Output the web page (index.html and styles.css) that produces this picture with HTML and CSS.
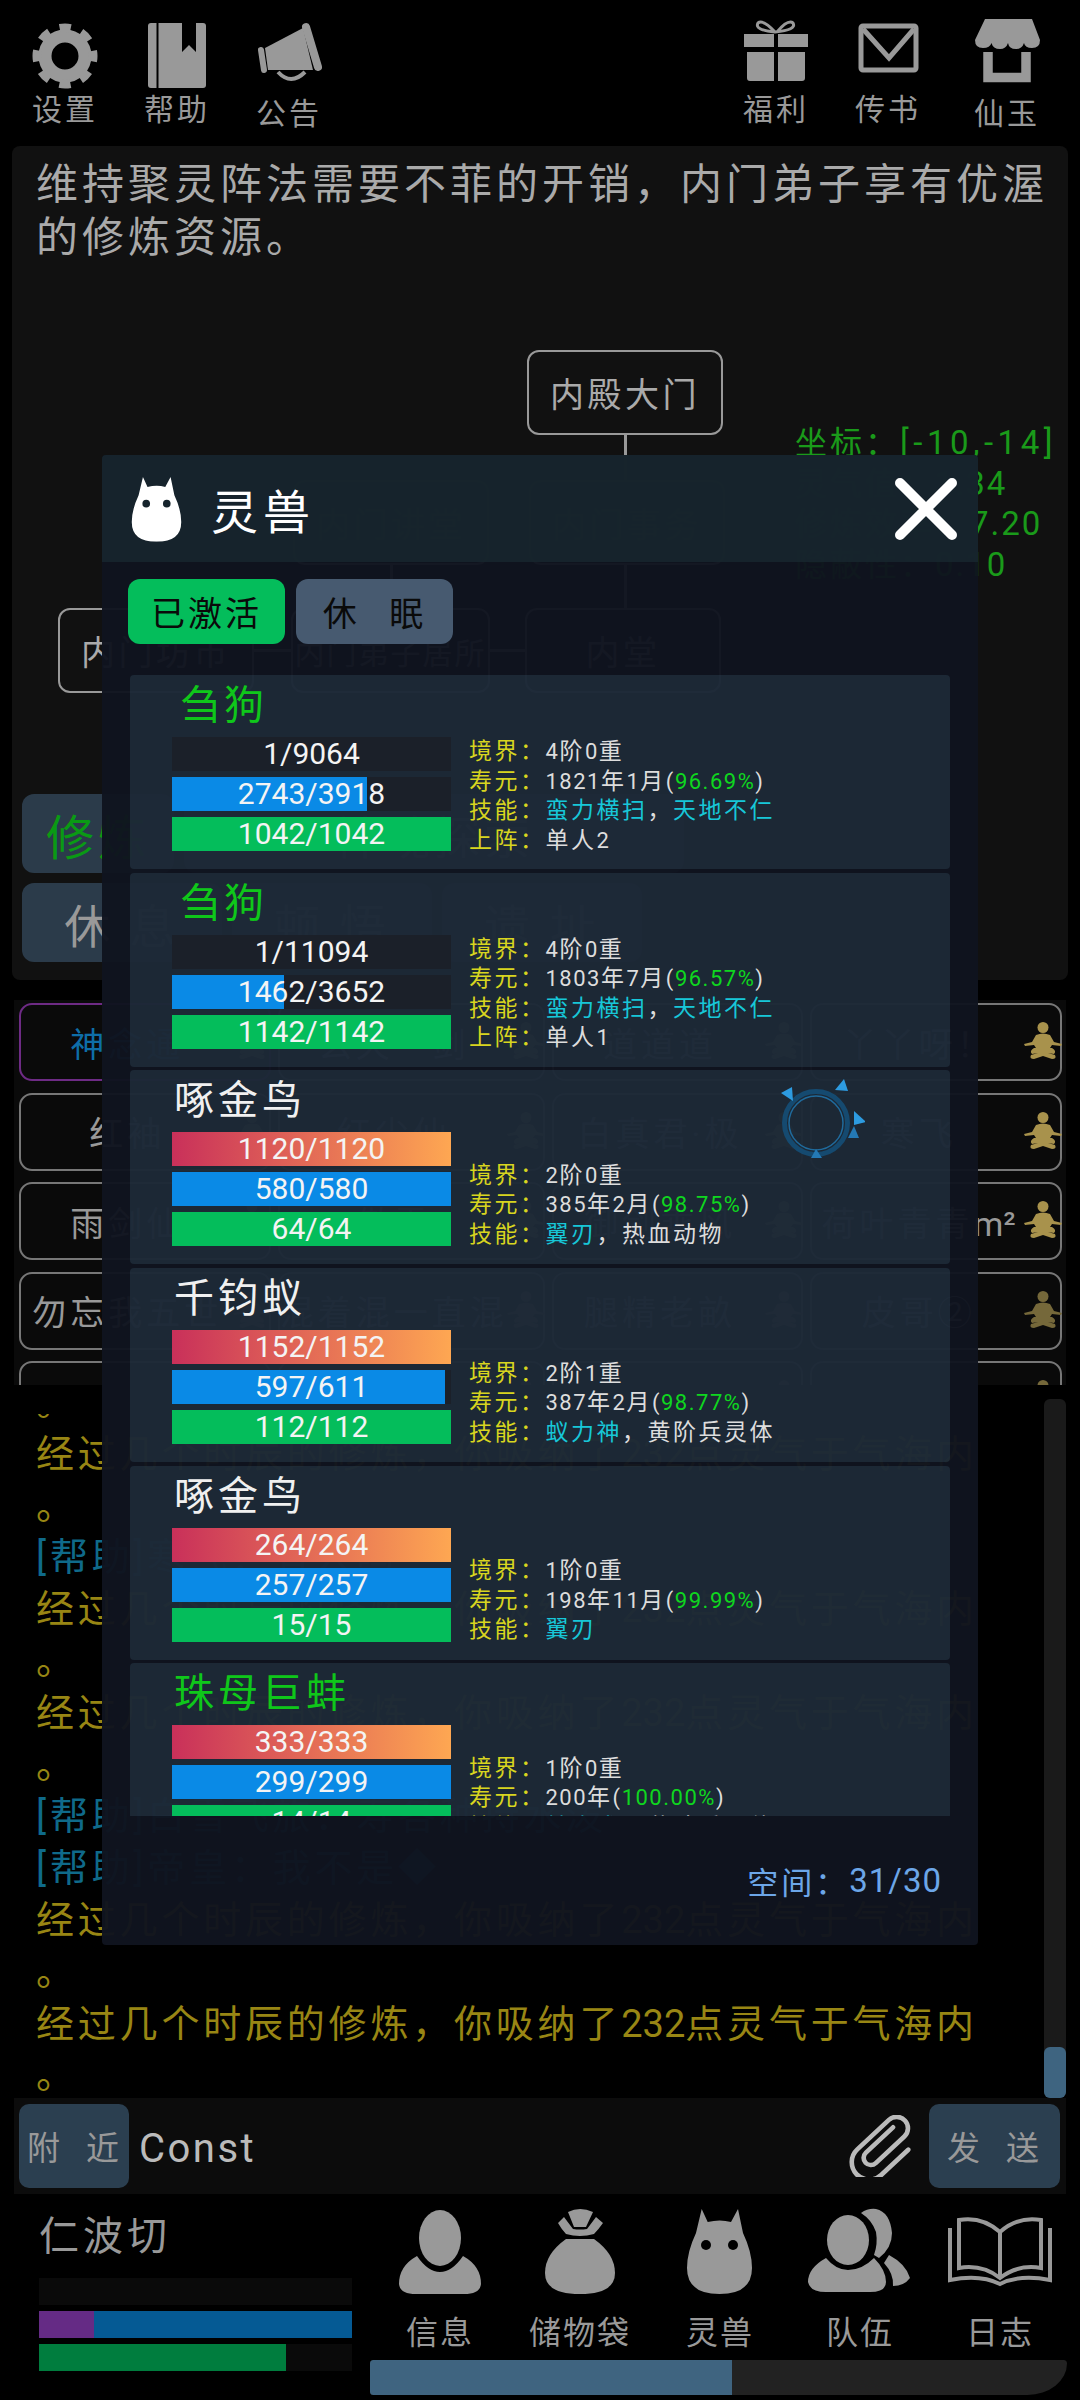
FILE: index.html
```html
<!DOCTYPE html>
<html lang="zh-CN">
<head>
<meta charset="utf-8">
<title>灵兽</title>
<link rel="stylesheet" href="styles.css">
</head>
<body>
<svg class="defs" width="0" height="0" aria-hidden="true">
  <symbol id="sit" viewBox="0 0 38 38">
    <circle cx="19" cy="5.5" r="5.5"/>
    <path d="M12 13 Q19 10 26 13 L30 20 L38 22 L37 24 L28 23 L26 26 L12 26 L10 23 L1 24 L0 22 L8 20Z"/>
    <path d="M10 26 L28 26 Q33 29 30 32 L24 31 L31 33 Q33 37 28 37 L19 34 L10 37 Q5 37 7 33 L14 31 L8 32 Q5 29 10 26Z"/>
  </symbol>
  <symbol id="cat" viewBox="0 0 67 86">
    <path d="M15.700 1 L21.700 14 Q34 11 45 14 L52 1 L57 25 Q66 44 66 60 Q66 86 33.500 86 Q1 86 1 60 Q1 44 10 25Z"/>
  </symbol>
</svg>

<div class="app">
  <header class="topbar">
    <div class="tools">
      <div class="tool">
        <svg class="tool-ico" viewBox="0 0 70 72"><circle cx="35" cy="39" r="20" fill="none" stroke="#999" stroke-width="13"/><circle cx="35" cy="39" r="28" fill="none" stroke="#999" stroke-width="9" stroke-dasharray="11 10.990" stroke-dashoffset="5.500"/></svg>
        <span class="tool-label">设置</span>
      </div>
      <div class="tool">
        <svg class="tool-ico" viewBox="0 0 70 72"><rect x="6" y="6" width="58" height="65" rx="3" fill="#999"/><path d="M15.500 6 V71" stroke="#000" stroke-width="2"/><path d="M40 6 H54 V35 L47 28 L40 35Z" fill="#000"/></svg>
        <span class="tool-label">帮助</span>
      </div>
      <div class="tool">
        <svg class="tool-ico" viewBox="0 0 70 72"><path d="M11 31 L49 11 L59 53 L14 53Z" fill="#999"/><path d="M7 33 L10 53" stroke="#999" stroke-width="6" stroke-linecap="round"/><path d="M52 10 L64 50" stroke="#999" stroke-width="8" stroke-linecap="round"/><path d="M24 55 Q37 69 51 55" fill="none" stroke="#999" stroke-width="4"/></svg>
        <span class="tool-label low">公告</span>
      </div>
    </div>
    <div class="tools tools-right">
      <div class="tool">
        <svg class="tool-ico" viewBox="0 0 70 72"><path d="M34 15 Q22 2 17 6 Q13 13 34 15 Q56 13 52 6 Q47 2 36 15" fill="none" stroke="#999" stroke-width="3"/><path d="M3 17 H33 V30 H3Z M37 17 H67 V30 H37Z" fill="#999"/><path d="M6 35 H33 V64 H9 Q6 64 6 61Z M37 35 H64 V61 Q64 64 61 64 H37Z" fill="#999"/></svg>
        <span class="tool-label">福利</span>
      </div>
      <div class="tool">
        <svg class="tool-ico" viewBox="0 0 70 72"><rect x="8" y="9" width="55" height="44" rx="2" fill="none" stroke="#999" stroke-width="5"/><path d="M10 12 L36 41 L61 12" fill="none" stroke="#999" stroke-width="5"/></svg>
        <span class="tool-label">传书</span>
      </div>
      <div class="tool tool-wide">
        <svg class="tool-ico" viewBox="0 0 70 72"><path d="M13 2 H60 L68 23 Q68 31 60 31 Q53 31 52 26 Q50 32 44 32 Q37 32 36 26 Q34 32 28 32 Q21 32 19.500 26 Q18 31 11 31 Q3 31 3 23Z" fill="#999"/><path d="M16 35 V60.500 H54 V35" fill="none" stroke="#999" stroke-width="9.500"/></svg>
        <span class="tool-label low">仙玉</span>
      </div>
    </div>
  </header>

  <section class="panel">
    <p class="panel-text">维持聚灵阵法需要不菲的开销，内门弟子享有优渥的修炼资源。</p>
    <div class="map">
      <i class="link l1"></i><i class="link l2"></i><i class="link l3"></i><i class="link l4"></i><i class="link l5"></i>
      <div class="node n1">内殿大门</div>
      <div class="node n2">内门讲堂</div>
      <div class="node n3">内门事务</div>
      <div class="node n4">内门坊市</div>
      <div class="node n5">内门弟子居所</div>
      <div class="node n6">内堂</div>
    </div>
    <div class="coords">
      <div>坐标：<span class="n wide">[-10,-14]</span></div>
      <div>灵气值：<span class="n">1.34</span></div>
      <div>修炼效率：<span class="n">7.20</span></div>
      <div>隐蔽性：<span class="n">0.10</span></div>
    </div>
    <div class="actions">
      <div class="action-row">
        <div class="action a-short on">修炼</div>
        <div class="action a-long">神魂探索</div>
      </div>
      <div class="action-row">
        <div class="action">休 息</div>
        <div class="action">顿 悟</div>
        <div class="action">遗 址</div>
      </div>
    </div>
  </section>

  <section class="players">
    <div class="player hot"><span class="pname blue">神念通</span><svg class="sit"><use href="#sit"/></svg></div>
    <div class="player"><span class="pname">玄天一剑</span><svg class="sit"><use href="#sit"/></svg></div>
    <div class="player"><span class="pname">道道道</span><svg class="sit"><use href="#sit"/></svg></div>
    <div class="player"><span class="pname">丫丫呀！</span><svg class="sit"><use href="#sit"/></svg></div>
    <div class="player"><span class="pname">红袖</span><svg class="sit"><use href="#sit"/></svg></div>
    <div class="player"><span class="pname">红尘仙</span><svg class="sit"><use href="#sit"/></svg></div>
    <div class="player"><span class="pname">白真君·极</span><svg class="sit"><use href="#sit"/></svg></div>
    <div class="player"><span class="pname">寒飞</span><svg class="sit"><use href="#sit"/></svg></div>
    <div class="player"><span class="pname">雨剑仙</span><svg class="sit"><use href="#sit"/></svg></div>
    <div class="player"><span class="pname">傲雪</span><svg class="sit"><use href="#sit"/></svg></div>
    <div class="player"><span class="pname">御剑乘风</span><svg class="sit"><use href="#sit"/></svg></div>
    <div class="player"><span class="pname">荷叶青青<span class="n">m²</span></span><svg class="sit"><use href="#sit"/></svg></div>
    <div class="player dim"><span class="pname">勿忘我五世</span><svg class="sit"><use href="#sit"/></svg></div>
    <div class="player dim"><span class="pname">混着混一直混</span><svg class="sit"><use href="#sit"/></svg></div>
    <div class="player dim"><span class="pname">腿精老畝</span><svg class="sit"><use href="#sit"/></svg></div>
    <div class="player dim"><span class="pname">皮哥②</span><svg class="sit"><use href="#sit"/></svg></div>
    <div class="player dim"><span class="pname">云中鹤</span><svg class="sit"><use href="#sit"/></svg></div>
    <div class="player dim"><span class="pname">青山</span><svg class="sit"><use href="#sit"/></svg></div>
    <div class="player dim"><span class="pname">长风</span><svg class="sit"><use href="#sit"/></svg></div>
    <div class="player dim"><span class="pname">落叶</span><svg class="sit"><use href="#sit"/></svg></div>
  </section>

  <section class="chat">
    <div class="chat-view">
      <div class="chat-lines">
        <p>。</p>
        <p>经过几个时辰的修炼，你吸纳了<span class="n">232</span>点灵气于气海内<br>。</p>
        <p class="tag">[帮助]寒飞：有人吗</p>
        <p>经过几个时辰的修炼，你吸纳了<span class="n">232</span>点灵气于气海内<br>。</p>
        <p>经过几个时辰的修炼，你吸纳了<span class="n">232</span>点灵气于气海内<br>。</p>
        <p class="tag">[帮助]白雪飞旅：寿各种持水泼</p>
        <p class="tag">[帮助]帝皇：我不是◆</p>
        <p>经过几个时辰的修炼，你吸纳了<span class="n">232</span>点灵气于气海内<br>。</p>
        <p>经过几个时辰的修炼，你吸纳了<span class="n">232</span>点灵气于气海内<br>。</p>
      </div>
    </div>
    <div class="scroll"><div class="thumb"></div></div>
  </section>

  <section class="inputbar">
    <div class="ibtn ibtn-l">附 近</div>
    <div class="itext">Const</div>
    <svg class="clip" viewBox="0 0 70 60"><g transform="translate(54 0) rotate(47)"><path d="M5 12 V48 a7 7 0 0 0 14 0 V10 a11 11 0 0 0 -22 0 V52 a17 17 0 0 0 34 0 V16" fill="none" stroke="#bbb" stroke-width="4.500" stroke-linecap="round"/></g></svg>
    <div class="ibtn ibtn-r">发 送</div>
  </section>

  <footer class="bottom">
    <div class="me">
      <div class="me-name">仁波切</div>
      <div class="mebar"></div>
      <div class="mebar mebar-mp"><div class="mp-a"></div></div>
      <div class="mebar"><div class="me-fill" style="width:79%"></div></div>
    </div>
    <div class="navwrap">
      <nav class="nav">
        <div class="nav-item">
          <svg class="nav-ico" viewBox="0 0 140 96"><ellipse cx="70" cy="36" rx="21" ry="28" fill="#999"/><path d="M47 54 Q29 64 29 82 Q30 92 46 92 H94 Q110 92 111 82 Q111 64 93 54 Q82 70 70 70 Q58 70 47 54Z" fill="#999"/></svg>
          <span>信息</span>
        </div>
        <div class="nav-item">
          <svg class="nav-ico" viewBox="0 0 140 96"><path d="M58 10 Q70 4 83 10 L76 25 H64Z" fill="#999"/><path d="M48 21 L54 15 L63 27 Q70 28 77 27 L86 15 L93 21 Q88 28 84 32 Q70 36 56 32 Q52 28 48 21Z" fill="#999"/><path d="M56 37 H84 Q105 52 105 71 Q105 92 70 92 Q35 92 35 71 Q35 52 56 37Z" fill="#999"/></svg>
          <span>储物袋</span>
        </div>
        <div class="nav-item">
          <svg class="nav-ico" viewBox="0 0 140 96"><use href="#cat" x="36" y="6" width="67" height="86" fill="#999"/><circle cx="56" cy="43" r="5" fill="#000"/><circle cx="83" cy="43" r="5" fill="#000"/></svg>
          <span>灵兽</span>
        </div>
        <div class="nav-item">
          <svg class="nav-ico" viewBox="0 0 140 96"><path d="M71 11 Q78 6 86 7 Q100 10 102 31 Q102 46 89 56 L84 53 Q88 42 86 30 Q82 18 71 11Z" fill="#999"/><path d="M99 53 Q116 62 120 76 Q114 84 103 84 Q104 72 94 61Z" fill="#999"/><ellipse cx="58" cy="38" rx="21" ry="25" fill="#999"/><path d="M36 56 Q18 66 18 80 Q20 90 36 90 H80 Q96 90 96 80 Q96 68 84 56 Q72 68 58 68 Q46 68 36 56Z" fill="#999"/></svg>
          <span>队伍</span>
        </div>
        <div class="nav-item">
          <svg class="nav-ico" viewBox="0 0 140 96"><path d="M70 30 Q52 14 29 18 V66 Q52 62 70 76 Q88 62 111 66 V18 Q88 14 70 30Z M70 30 V76" fill="none" stroke="#999" stroke-width="4"/><path d="M20 26 V78 Q50 72 70 82 Q90 72 120 78 V26" fill="none" stroke="#999" stroke-width="4"/></svg>
          <span>日志</span>
        </div>
      </nav>
      <div class="prog"><div class="prog-fill" style="width:52%"></div></div>
    </div>
  </footer>
</div>

<div class="modal">
  <div class="modal-head">
    <svg class="head-cat" viewBox="0 0 67 86"><use href="#cat" width="67" height="86" fill="#fff"/><circle cx="20" cy="36" r="5" fill="#16242c"/><circle cx="47" cy="36" r="5" fill="#16242c"/></svg>
    <div class="modal-title">灵兽</div>
    <svg class="close" viewBox="0 0 62 62"><path d="M5 5 L57 57 M57 5 L5 57" stroke="#fff" stroke-width="10" stroke-linecap="round"/></svg>
  </div>
  <div class="tabs">
    <div class="tab tab-on">已激活</div>
    <div class="tab tab-off">休 眠</div>
  </div>
  <div class="list">
    <article class="pet">
      <div class="pet-name good short">刍狗</div>
      <div class="pet-body">
        <div class="bars">
          <div class="bar"><div class="fill" style="width:0"></div><span>1/9064</span></div>
          <div class="bar"><div class="fill mp" style="width:70%"></div><span>2743/3918</span></div>
          <div class="bar"><div class="fill hp" style="width:100%"></div><span>1042/1042</span></div>
        </div>
        <div class="info">
          <div><b>境界：</b><span class="n">4</span>阶<span class="n">0</span>重</div>
          <div><b>寿元：</b><span class="n">1821</span>年<span class="n">1</span>月<span class="n">(<em>96.69%</em>)</span></div>
          <div><b>技能：</b><i>蛮力横扫</i>，<i>天地不仁</i></div>
          <div><b>上阵：</b>单人<span class="n">2</span></div>
        </div>
      </div>
    </article>
    <article class="pet">
      <div class="pet-name good short">刍狗</div>
      <div class="pet-body">
        <div class="bars">
          <div class="bar"><div class="fill" style="width:0"></div><span>1/11094</span></div>
          <div class="bar"><div class="fill mp" style="width:40%"></div><span>1462/3652</span></div>
          <div class="bar"><div class="fill hp" style="width:100%"></div><span>1142/1142</span></div>
        </div>
        <div class="info">
          <div><b>境界：</b><span class="n">4</span>阶<span class="n">0</span>重</div>
          <div><b>寿元：</b><span class="n">1803</span>年<span class="n">7</span>月<span class="n">(<em>96.57%</em>)</span></div>
          <div><b>技能：</b><i>蛮力横扫</i>，<i>天地不仁</i></div>
          <div><b>上阵：</b>单人<span class="n">1</span></div>
        </div>
      </div>
    </article>
    <article class="pet">
      <div class="pet-name">啄金鸟</div>
      <div class="pet-body">
        <div class="bars">
          <div class="bar"><div class="fill exp" style="width:100%"></div><span>1120/1120</span></div>
          <div class="bar"><div class="fill mp" style="width:100%"></div><span>580/580</span></div>
          <div class="bar"><div class="fill hp" style="width:100%"></div><span>64/64</span></div>
        </div>
        <div class="info">
          <div><b>境界：</b><span class="n">2</span>阶<span class="n">0</span>重</div>
          <div><b>寿元：</b><span class="n">385</span>年<span class="n">2</span>月<span class="n">(<em>98.75%</em>)</span></div>
          <div><b>技能：</b><i>翼刃</i>，热血动物</div>
        </div>
      </div>
    </article>
    <article class="pet">
      <div class="pet-name">千钧蚁</div>
      <div class="pet-body">
        <div class="bars">
          <div class="bar"><div class="fill exp" style="width:100%"></div><span>1152/1152</span></div>
          <div class="bar"><div class="fill mp" style="width:97.7%"></div><span>597/611</span></div>
          <div class="bar"><div class="fill hp" style="width:100%"></div><span>112/112</span></div>
        </div>
        <div class="info">
          <div><b>境界：</b><span class="n">2</span>阶<span class="n">1</span>重</div>
          <div><b>寿元：</b><span class="n">387</span>年<span class="n">2</span>月<span class="n">(<em>98.77%</em>)</span></div>
          <div><b>技能：</b><i>蚁力神</i>，黄阶兵灵体</div>
        </div>
      </div>
    </article>
    <article class="pet">
      <div class="pet-name">啄金鸟</div>
      <div class="pet-body">
        <div class="bars">
          <div class="bar"><div class="fill exp" style="width:100%"></div><span>264/264</span></div>
          <div class="bar"><div class="fill mp" style="width:100%"></div><span>257/257</span></div>
          <div class="bar"><div class="fill hp" style="width:100%"></div><span>15/15</span></div>
        </div>
        <div class="info">
          <div><b>境界：</b><span class="n">1</span>阶<span class="n">0</span>重</div>
          <div><b>寿元：</b><span class="n">198</span>年<span class="n">11</span>月<span class="n">(<em>99.99%</em>)</span></div>
          <div><b>技能：</b><i>翼刃</i></div>
        </div>
      </div>
    </article>
    <article class="pet">
      <div class="pet-name good">珠母巨蚌</div>
      <div class="pet-body">
        <div class="bars">
          <div class="bar"><div class="fill exp" style="width:100%"></div><span>333/333</span></div>
          <div class="bar"><div class="fill mp" style="width:100%"></div><span>299/299</span></div>
          <div class="bar"><div class="fill hp" style="width:100%"></div><span>14/14</span></div>
        </div>
        <div class="info">
          <div><b>境界：</b><span class="n">1</span>阶<span class="n">0</span>重</div>
          <div><b>寿元：</b><span class="n">200</span>年<span class="n">(<em>100.00%</em>)</span></div>
          <div><b>技能：</b><i>蚌壳术</i>，黄阶兵灵体</div>
        </div>
      </div>
    </article>
  </div>
  <div class="modal-foot">空间：<span class="n">31/30</span></div>
</div>

<svg class="loader" viewBox="0 0 90 90">
  <circle cx="41" cy="45" r="31.500" fill="none" stroke="#154a70" stroke-width="5"/>
  <circle cx="41" cy="45" r="27" fill="none" stroke="#1f6a9c" stroke-width="1.500"/>
  <path d="M6 15 L17 9 L18 23Z" fill="#2d9be0"/>
  <path d="M60 12 L69 1 L73 13Z" fill="#2d9be0"/>
  <path d="M79 33 L91 44 L79 47Z" fill="#2d9be0"/>
  <path d="M73 60 L79 48 L84 60Z" fill="#2479b5"/>
  <path d="M36 80 L41 71 L47 80Z" fill="#2479b5"/>
</svg>
</body>
</html>
```

FILE: styles.css
```css
* { box-sizing: border-box; }
html, body { margin: 0; padding: 0; background: #000; }
body {
  position: relative;
  width: 1080px;
  height: 2400px;
  overflow: hidden;
  font-family: "Roboto", "Noto Sans CJK SC", sans-serif;
  color: #999;
}
.defs { position: absolute; }
.n { letter-spacing: 0; }

.app { display: flex; flex-direction: column; width: 1080px; height: 2400px; }

/* top bar */
.topbar { display: flex; justify-content: space-between; height: 146px; padding: 17px 17px 0 9px; flex: none; }
.tools { display: flex; }
.tool { width: 112px; display: flex; flex-direction: column; align-items: center; }
.tool-wide { margin-left: 7px; }
.tool-ico { width: 70px; height: 72px; display: block; }
.tool-label { font-size: 30px; line-height: 36px; letter-spacing: 3px; margin-top: 3px; color: #999; }
.tool-label.low { margin-top: 7px; }

/* main panel */
.panel {
  position: relative;
  flex: none;
  height: 834px;
  margin: 0 12px;
  background: #111;
  border-radius: 8px;
  display: flex;
  flex-direction: column;
  padding: 12px 10px 18px;
}
.panel-text { margin: 0; padding: 0 8px 0 14px; font-size: 42px; line-height: 53px; letter-spacing: 4px; color: #aaa; }
.map { position: absolute; inset: 0; }
.node {
  position: absolute;
  width: 196px;
  height: 85px;
  display: flex;
  align-items: center;
  justify-content: center;
  border: 2px solid #999;
  border-radius: 12px;
  background: #111;
  font-size: 34px;
  letter-spacing: 3.500px;
  color: #aaa;
  white-space: nowrap;
}
.n1 { left: 515px; top: 204px; }
.n2 { left: 281px; top: 334px; }
.n3 { left: 517px; top: 334px; }
.n4 { left: 46px; top: 462px; }
.n5 { left: 279px; top: 462px; width: 199px; font-size: 30px; letter-spacing: 2px; }
.n6 { left: 513px; top: 462px; }
.link { position: absolute; background: #999; }
.l1 { left: 612px; top: 288px; width: 3px; height: 48px; }
.l2 { left: 612px; top: 418px; width: 3px; height: 46px; }
.l3 { left: 378px; top: 418px; width: 3px; height: 46px; }
.l4 { left: 240px; top: 503px; width: 40px; height: 3px; }
.l5 { left: 476px; top: 503px; width: 40px; height: 3px; }
.coords { position: absolute; left: 783px; top: 277px; font-size: 32px; line-height: 40.500px; letter-spacing: 3px; color: #1a9a1a; white-space: nowrap; }
.coords .n { font-size: 33px; letter-spacing: 2px; }
.coords .n.wide { letter-spacing: 4.500px; }
.actions { margin-top: auto; display: flex; flex-direction: column; gap: 10px; }
.action-row { display: flex; gap: 10px; }
.action {
  width: 200px;
  height: 79px;
  display: flex;
  align-items: center;
  justify-content: center;
  border-radius: 12px;
  background: #2b3b4a;
  font-size: 46px;
  color: #999;
  letter-spacing: 4px;
  white-space: pre;
}
.a-short { width: 152px; }
.a-long { width: 500px; }
.action.on { color: #0a9a14; font-size: 48px; }

/* players */
.players {
  flex: none;
  height: 385px;
  margin: 20px 14px 0;
  padding: 3px 4px 0 5px;
  background: #0a0a0a;
  overflow: hidden;
  display: grid;
  grid-template-columns: repeat(4, 1fr);
  grid-auto-rows: 78px;
  gap: 11.500px 7px;
}
.player {
  position: relative;
  border: 2px solid #777;
  border-radius: 13px;
  background: #0a0a0a;
  display: flex;
  align-items: center;
  justify-content: center;
  padding-right: 35px;
}
.player.hot { border-color: #6e2b85; }
.player.dim .sit { fill: #75683a; }
.pname { font-size: 34px; letter-spacing: 4px; color: #999; white-space: nowrap; }
.pname.blue { color: #0e6ea8; }
.sit { position: absolute; right: -2px; top: 17px; width: 38px; height: 38px; fill: #a8924c; }

/* chat */
.chat { position: relative; flex: none; height: 713px; padding: 29px 70px 0 36px; }
.chat-view { height: 684px; overflow: hidden; }
.chat-lines { margin-top: -37px; }
.chat-lines p { margin: 0; font-size: 38px; line-height: 51.800px; letter-spacing: 3.800px; color: #988614; white-space: nowrap; }
.chat-lines p.tag { color: #0f6a8a; }
.scroll { position: absolute; right: 14px; top: 14px; width: 22px; height: 699px; border-radius: 6px; background: #1a1a1a; display: flex; align-items: flex-end; }
.thumb { width: 22px; height: 51px; border-radius: 6px; background: #3e6480; }

/* input */
.inputbar {
  flex: none;
  height: 96px;
  margin: 0 14px;
  padding: 6px 6px;
  background: #0c0c0c;
  display: flex;
  align-items: stretch;
}
.ibtn {
  border-radius: 10px;
  background: #2b3f50;
  color: #999;
  font-size: 33px;
  display: flex;
  align-items: center;
  justify-content: center;
  white-space: pre;
}
.ibtn-l { width: 110px; margin-left: -1px; letter-spacing: 2px; word-spacing: 14px; }
.ibtn-r { width: 131px; letter-spacing: 3px; word-spacing: 12px; }
.itext { flex: 1; margin-left: 10px; padding-top: 4px; font-size: 40px; letter-spacing: 2.500px; color: #bbb; display: flex; align-items: center; }
.clip { width: 72px; height: 62px; align-self: center; margin-right: 14px; }

/* bottom */
.bottom { flex: 1; display: flex; padding-left: 39px; }
.me { width: 313px; padding-top: 19px; display: flex; flex-direction: column; }
.me-name { font-size: 40px; line-height: 48px; letter-spacing: 4px; color: #999; margin-bottom: 17px; }
.mebar { height: 27px; margin-bottom: 6px; background: #0a0a0a; }
.mebar-mp { background: #055a94; }
.mp-a { width: 55px; height: 27px; background: #652b85; }
.me-fill { height: 27px; background: #007d3e; }
.navwrap { margin-left: 18px; width: 697px; display: flex; flex-direction: column; }
.nav { display: flex; padding-top: 8px; }
.nav-item { width: 140px; display: flex; flex-direction: column; align-items: center; font-size: 32px; line-height: 40px; letter-spacing: 2px; color: #999; }
.nav-item span { margin-top: 15px; }
.nav-ico { width: 140px; height: 96px; display: block; }
.prog { margin-top: 7px; height: 35px; background: #222; border-radius: 4px 4px 44px 4px / 4px 4px 35px 4px; overflow: hidden; }
.prog-fill { height: 35px; background: #3f6480; }

/* modal */
.modal {
  position: absolute;
  left: 102px;
  top: 455px;
  width: 876px;
  height: 1490px;
  background: rgba(16, 20, 31, .97);
  border-radius: 4px;
  display: flex;
  flex-direction: column;
}
.modal-head { flex: none; height: 107px; background: rgba(23, 38, 46, .9); display: flex; align-items: center; padding: 0 21px 0 29px; border-radius: 4px 4px 0 0; }
.head-cat { width: 51px; height: 66px; }
.modal-title { margin-left: 29px; font-size: 47px; letter-spacing: 5px; color: #fff; }
.close { margin-left: auto; width: 62px; height: 62px; }
.tabs { flex: none; display: flex; gap: 11px; padding: 17px 26px 0; height: 113px; }
.tab { width: 157px; height: 65px; border-radius: 12px; display: flex; align-items: center; justify-content: center; font-size: 34px; letter-spacing: 3px; color: #0a0a0a; white-space: pre; }
.tab-on { background: #04bd5b; }
.tab-off { background: #475a70; word-spacing: 18px; }
.list { flex: none; height: 1141px; margin: 0 28px; overflow: hidden; display: flex; flex-direction: column; gap: 3.700px; }
.pet { flex: none; height: 194px; background: rgba(60, 90, 108, .3); border-radius: 4px; }
.pet-name { height: 62px; padding-left: 44px; font-size: 40px; line-height: 62px; letter-spacing: 4px; color: #f0f0f0; white-space: nowrap; }
.pet-name.good { color: #0fc71a; }
.pet-name.short { padding-left: 50px; }
.pet-body { display: flex; padding-left: 42px; }
.bars { width: 279px; display: flex; flex-direction: column; gap: 6px; flex: none; }
.bar { display: grid; height: 34px; background: #1b2029; }
.bar > * { grid-area: 1 / 1; }
.bar span { justify-self: center; align-self: center; font-size: 30px; line-height: 34px; color: #f4f4f4; }
.fill { height: 34px; }
.fill.mp { background: #0a8ae6; }
.fill.hp { background: #04bd5b; }
.fill.exp { background: linear-gradient(90deg, #c9305a, #fea752); }
.info { align-self: flex-end; margin: 0 0 -3px 18px; font-size: 23px; line-height: 29.500px; letter-spacing: 2.500px; color: #ddd; white-space: nowrap; }
.info b { font-weight: 400; color: #d8d51f; }
.info i { font-style: normal; color: #17c7d8; }
.info em { font-style: normal; color: #0fd61f; }
.info .n { font-size: 22px; letter-spacing: 1.500px; }
.modal-foot { flex: 1; display: flex; align-items: center; justify-content: flex-end; padding: 0 36px 0 0; font-size: 31px; letter-spacing: 3px; color: #6ca6e8; }
.modal-foot .n { font-size: 33px; letter-spacing: 1px; }

.loader { position: absolute; left: 775px; top: 1078px; width: 90px; height: 90px; }
```
